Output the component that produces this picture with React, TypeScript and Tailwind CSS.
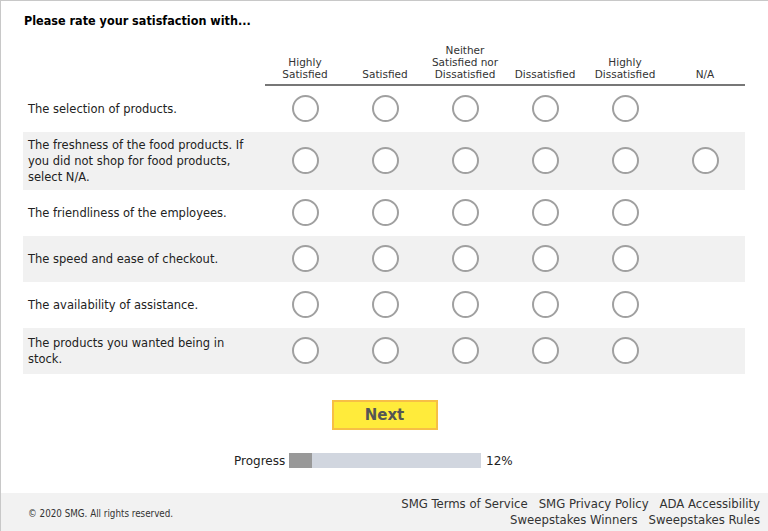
import { useState } from 'react';

const columns = [
  ['Highly', 'Satisfied'],
  ['Satisfied'],
  ['Neither', 'Satisfied nor', 'Dissatisfied'],
  ['Dissatisfied'],
  ['Highly', 'Dissatisfied'],
  ['N/A'],
];

const questions = [
  { text: 'The selection of products.', na: false },
  { text: 'The freshness of the food products. If you did not shop for food products, select N/A.', na: true },
  { text: 'The friendliness of the employees.', na: false },
  { text: 'The speed and ease of checkout.', na: false },
  { text: 'The availability of assistance.', na: false },
  { text: 'The products you wanted being in stock.', na: false },
];

function Radio({ checked, onClick }: { checked: boolean; onClick: () => void }) {
  return (
    <button
      onClick={onClick}
      className="w-[27px] h-[27px] rounded-full border-2 border-[#a0a0a0] bg-white flex items-center justify-center"
    >
      {checked && <span className="w-[13px] h-[13px] rounded-full bg-[#555]" />}
    </button>
  );
}

export default function App() {
  const [answers, setAnswers] = useState<Record<number, number>>({});

  return (
    <div
      className="w-[768px] h-[531px] bg-white border-l border-t border-[#c8c8c8] flex flex-col text-[#222]"
      style={{ fontFamily: '"DejaVu Sans", Verdana, sans-serif' }}
    >
      <div className="flex-1 pl-[22px]">
        <h1
          className="pt-[11px] pl-[1px] text-[12.5px] font-bold text-black"
          style={{ fontFamily: '"DejaVu Sans Condensed", "DejaVu Sans", sans-serif' }}
        >
          Please rate your satisfaction with...
        </h1>

        <div className="mt-[13px] w-[722px]">
          {/* Header */}
          <div className="flex">
            <div className="w-[242px]" />
            <div className="flex border-b-2 border-[#777] pb-[4px]">
              {columns.map((lines, i) => (
                <div key={i} className="w-[80px] flex flex-col justify-end items-center text-[10.5px] leading-[12px] text-[#333]">
                  {lines.map(l => (
                    <span key={l}>{l}</span>
                  ))}
                </div>
              ))}
            </div>
          </div>

          {/* Rows */}
          {questions.map((q, r) => (
            <div key={r} className={`flex items-center ${r % 2 === 1 ? 'bg-[#f1f1f1]' : 'bg-white'} ${r === 1 ? 'h-[58px]' : 'h-[46px]'}`}>
              <div className="w-[242px] pl-[5px] pr-[18px] text-[11.5px] leading-[16px] text-[#222]">{q.text}</div>
              {columns.map((_, c) => (
                <div key={c} className="w-[80px] flex justify-center">
                  {(c < 5 || q.na) && (
                    <Radio checked={answers[r] === c} onClick={() => setAnswers({ ...answers, [r]: c })} />
                  )}
                </div>
              ))}
            </div>
          ))}
        </div>

        <div className="flex justify-center mt-[26px] pr-[22px]">
          <button className="w-[106px] h-[30px] bg-[#ffeb3b] border-2 border-[#f7bf45] text-[15px] font-bold text-[#555]">
            Next
          </button>
        </div>

        <div className="flex items-center mt-[22px] ml-[211px] text-[12px] text-[#222]">
          <span className="w-[55px]">Progress</span>
          <div className="w-[192px] h-[15px] bg-[#d1d6df]">
            <div className="h-full bg-[#999]" style={{ width: '12%' }} />
          </div>
          <span className="ml-[5px]">12%</span>
        </div>
      </div>

      <div
        className="h-[38px] bg-[#f2f2f2] flex items-center justify-between pl-[27px] pr-[8px]"
        style={{ fontFamily: '"DejaVu Sans Condensed", "DejaVu Sans", sans-serif' }}
      >
        <span className="text-[9.75px] text-[#333] mt-[5px]">© 2020 SMG. All rights reserved.</span>
        <div className="flex flex-col items-end text-[13px] leading-[16px] text-[#333]">
          <div className="flex gap-[11px]">
            <span>SMG Terms of Service</span>
            <span>SMG Privacy Policy</span>
            <span>ADA Accessibility</span>
          </div>
          <div className="flex gap-[11px]">
            <span>Sweepstakes Winners</span>
            <span>Sweepstakes Rules</span>
          </div>
        </div>
      </div>
    </div>
  );
}
